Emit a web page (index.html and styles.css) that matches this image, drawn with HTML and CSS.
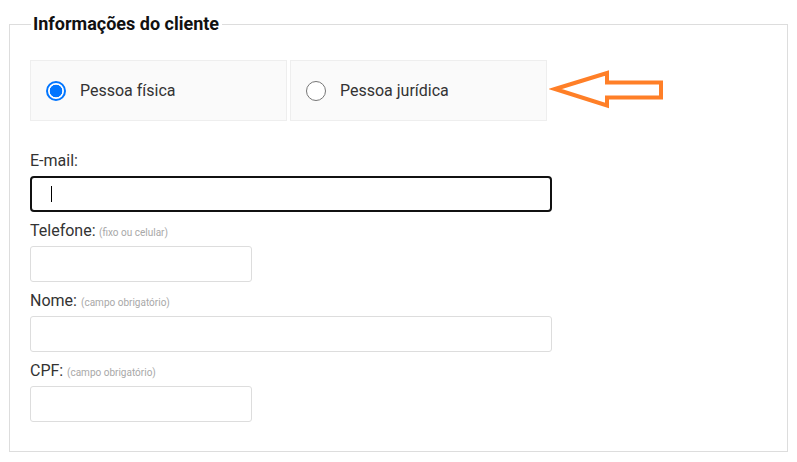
FILE: index.html
```html
<!DOCTYPE html>
<html lang="pt-BR">
<head>
<meta charset="utf-8">
<title>Informações do cliente</title>
<link rel="stylesheet" href="styles.css">
</head>
<body>
<div class="page">
  <fieldset class="client">
    <legend class="client-title">Informações do cliente</legend>
    <div class="type-row">
      <div class="type-choice">
        <div class="type-options">
          <label class="type-option">
            <span class="radio radio-checked"></span>
            <span class="type-text">Pessoa física</span>
          </label>
          <label class="type-option">
            <span class="radio"></span>
            <span class="type-text">Pessoa jurídica</span>
          </label>
        </div>
      </div>
      <div class="arrow-wrap">
        <svg class="arrow" width="120" height="50" viewBox="545 68 120 50" xmlns="http://www.w3.org/2000/svg">
          <polygon points="551,91 603,75 603,84.5 657,84.5 657,99.5 603,99.5 603,107.5" fill="none" stroke="#ff7f27" stroke-width="4" stroke-linejoin="miter"/>
        </svg>
      </div>
    </div>

    <div class="fields">
      <div class="field">
        <div class="field-label">E-mail:</div>
        <div class="box box-wide box-focus"><span class="caret"></span></div>
      </div>
      <div class="field">
        <div class="field-label">Telefone: <span class="hint">(fixo ou celular)</span></div>
        <div class="box box-short"></div>
      </div>
      <div class="field">
        <div class="field-label">Nome: <span class="hint">(campo obrigatório)</span></div>
        <div class="box box-wide"></div>
      </div>
      <div class="field">
        <div class="field-label">CPF: <span class="hint">(campo obrigatório)</span></div>
        <div class="box box-short"></div>
      </div>
    </div>
  </fieldset>
</div>
</body>
</html>
```

FILE: styles.css
```css
html, body {
  margin: 0;
  padding: 0;
  background: #ffffff;
}

body {
  font-family: Roboto, "Liberation Sans", Arial, sans-serif;
  color: #333333;
}

.page {
  padding: 14px 0 0 9px;
}

.client {
  box-sizing: border-box;
  width: 779px;
  margin: 0;
  min-width: 0;
  border: 1px solid #dddddd;
  padding: 26px 20px 29px 20px;
}

.client-title {
  font-size: 18px;
  font-weight: 700;
  line-height: 20px;
  color: #111111;
  padding: 0 3px 0 2px;
  margin-left: 1px;
}

.type-row {
  display: flex;
  align-items: center;
}

.type-options {
  display: flex;
  gap: 3px;
}

.type-option {
  box-sizing: border-box;
  width: 257px;
  height: 61px;
  background: #fafafa;
  border: 1px solid #eeeeee;
  display: flex;
  align-items: center;
  padding-left: 15px;
  gap: 14px;
  font-size: 16px;
}

.type-text {
  color: #333333;
}

.radio {
  box-sizing: border-box;
  width: 20px;
  height: 20px;
  border-radius: 50%;
  border: 1px solid #767676;
  background: #ffffff;
  flex: none;
}

.radio-checked {
  border: 2px solid #0075ff;
  background: radial-gradient(circle, #0075ff 0, #0075ff 6px, #ffffff 6.6px);
}

.arrow-wrap {
  display: flex;
  align-items: center;
  padding-left: 2px;
}

.arrow {
  display: block;
}

.fields {
  padding-top: 21px;
}

.field {
  margin-top: 9px;
}

.field-label {
  font-size: 16px;
  line-height: 20px;
  height: 20px;
  margin-bottom: 5px;
  color: #333333;
  white-space: nowrap;
}

.hint {
  font-size: 11px;
  line-height: 1;
  color: #a8a8a8;
  display: inline-block;
  transform: scaleX(0.91);
  transform-origin: left center;
}

.box {
  box-sizing: border-box;
  height: 36px;
  border: 1px solid #dddddd;
  border-radius: 3px;
  background: #ffffff;
}

.box-wide {
  width: 522px;
}

.box-short {
  width: 222px;
}

.box-focus {
  border: 2px solid #111111;
  border-radius: 4px;
  display: flex;
  align-items: center;
  padding-left: 19px;
}

.caret {
  display: block;
  width: 1px;
  height: 16px;
  background: #000000;
}
```
